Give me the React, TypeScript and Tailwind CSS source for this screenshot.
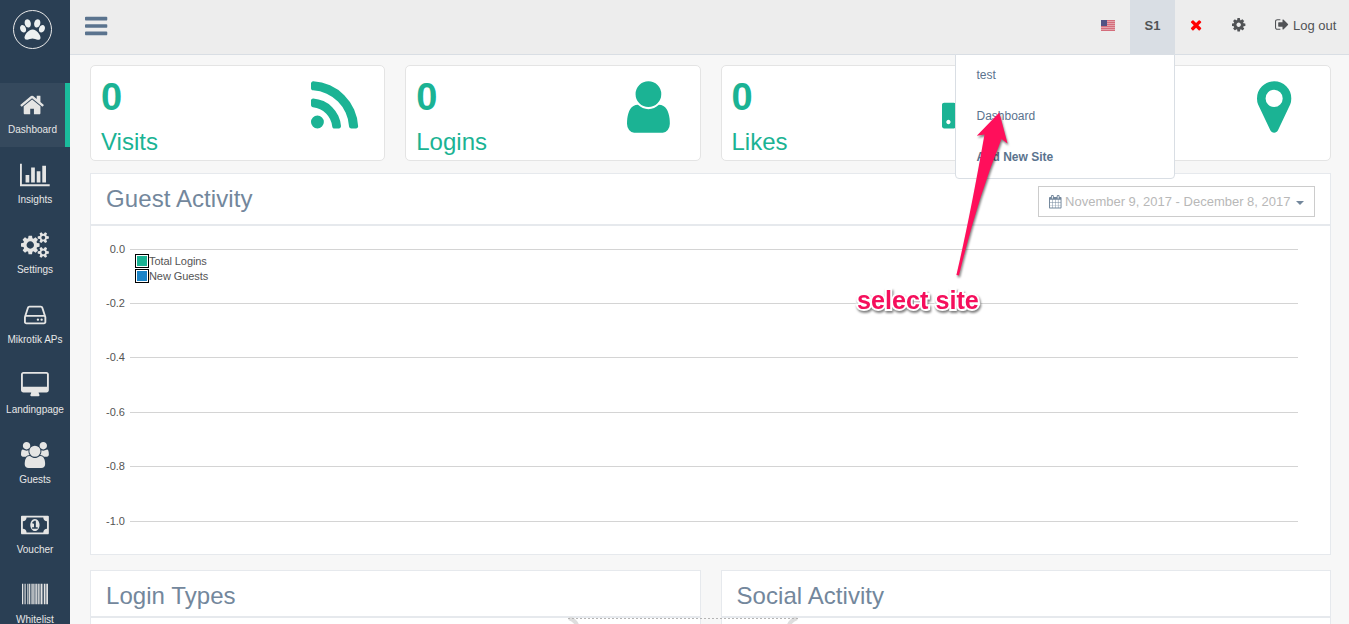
import React from "react";

const PATHS = {
  paw: "M780 508q0 60-19 113.5t-63 92.5-105 39q-76 0-138-57.5t-92-135.5-30-151q0-60 19-113.5t63-92.5 105-39q77 0 138.5 57.5t91.5 135 30 151.5zM439 921q0 80-42 139t-119 59q-76 0-141.5-55.5t-100.5-133.5-35-152q0-80 42-139.5t119-59.5q76 0 141.5 55.5t100.5 134 35 152.5zM896 894q118 0 255 97.5t229 237 92 254.5q0 46-17 76.5t-48.5 45-64.5 20-76 5.5q-68 0-187.5-45t-182.5-45q-66 0-192.5 44.5t-200.5 44.5q-183 0-183-146 0-86 56-191.5t139.5-192.5 187.5-146 193-59zM1199 753q-61 0-105-39t-63-92.5-19-113.5q0-74 30-151.5t91.5-135 138.5-57.5q61 0 105 39t63 92.5 19 113.5q0 73-30 151t-92 135.5-138 57.5zM1630 579q77 0 119 59.5t42 139.5q0 74-35 152t-100.5 133.5-141.5 55.5q-77 0-119-59t-42-139q0-74 35-152.5t100.5-134 141.5-55.5z",
  home: "M1472 992v480q0 26-19 45t-45 19h-384v-384h-256v384h-384q-26 0-45-19t-19-45v-480q0-1 .5-3t.5-3l575-474 575 474q1 2 1 6zm223-69l-62 74q-8 9-21 11h-3q-13 0-21-7l-692-577-692 577q-12 8-24 7-13-2-21-11l-62-74q-8-10-7-23.5t11-21.5l719-599q32-26 76-26t76 26l244 204v-195q0-14 9-23t23-9h192q14 0 23 9t9 23v408l219 182q10 8 11 21.5t-7 23.5z",
  chart: "M640 896v512h-256v-512h256zm384-512v1024h-256v-1024h256zm1024 1152v128h-2048v-1536h128v1408h1920zm-640-896v768h-256v-768h256zm384-384v1152h-256v-1152h256z",
  cogs: "M832 896q0-106-75-181t-181-75-181 75-75 181 75 181 181 75 181-75 75-181zm768 512q0-52-38-90t-90-38-90 38-38 90q0 53 37.5 90.5t90.5 37.5 90.5-37.5 37.5-90.5zm0-1024q0-52-38-90t-90-38-90 38-38 90q0 53 37.5 90.5t90.5 37.5 90.5-37.5 37.5-90.5zm-384 421v185q0 10-7 19.5t-16 10.5l-155 24q-11 35-32 76 34 48 90 115 7 11 7 20 0 12-7 19-23 30-82.5 89.5t-78.5 59.5q-11 0-21-7l-115-90q-37 19-77 31-11 108-23 155-7 24-30 24h-186q-11 0-20-7.5t-10-17.5l-23-153q-34-10-75-31l-118 89q-7 7-20 7-11 0-21-8-144-133-144-160 0-9 7-19 10-14 41-53t47-61q-23-44-35-82l-152-24q-10-1-17-9.5t-7-19.5v-185q0-10 7-19.5t16-10.5l155-24q11-35 32-76-34-48-90-115-7-11-7-20 0-12 7-20 22-30 82-89t79-59q11 0 21 7l115 90q34-18 77-32 11-108 23-154 7-24 30-24h186q11 0 20 7.5t10 17.5l23 153q34 10 75 31l118-89q8-7 20-7 11 0 21 8 144 133 144 160 0 8-7 19-12 16-42 54t-45 60q23 48 34 82l152 23q10 2 17 10.5t7 19.5zm640 533v140q0 16-149 31-12 27-30 52 51 113 51 138 0 4-4 7-122 71-124 71-8 0-46-47t-52-68q-20 2-30 2t-30-2q-14 21-52 68t-46 47q-2 0-124-71-4-3-4-7 0-25 51-138-18-25-30-52-149-15-149-31v-140q0-16 149-31 13-29 30-52-51-113-51-138 0-4 4-7 4-2 35-20t59-34 30-16q8 0 46 46.5t52 67.5q20-2 30-2t30 2q51-71 92-112l6-2q4 0 124 70 4 3 4 7 0 25-51 138 17 23 30 52 149 15 149 31zm0-1024v140q0 16-149 31-12 27-30 52 51 113 51 138 0 4-4 7-122 71-124 71-8 0-46-47t-52-68q-20 2-30 2t-30-2q-14 21-52 68t-46 47q-2 0-124-71-4-3-4-7 0-25 51-138-18-25-30-52-149-15-149-31v-140q0-16 149-31 13-29 30-52-51-113-51-138 0-4 4-7 4-2 35-20t59-34 30-16q8 0 46 46.5t52 67.5q20-2 30-2t30 2q51-71 92-112l6-2q4 0 124 70 4 3 4 7 0 25-51 138 17 23 30 52 149 15 149 31z",
  hdd: "M1168 1216q0 33-23.5 56.5t-56.5 23.5-56.5-23.5-23.5-56.5 23.5-56.5 56.5-23.5 56.5 23.5 23.5 56.5zm256 0q0 33-23.5 56.5t-56.5 23.5-56.5-23.5-23.5-56.5 23.5-56.5 56.5-23.5 56.5 23.5 23.5 56.5zm112 160v-320q0-13-9.5-22.5t-22.5-9.5h-1216q-13 0-22.5 9.5t-9.5 22.5v320q0 13 9.5 22.5t22.5 9.5h1216q13 0 22.5-9.5t9.5-22.5zm-1230-480h1180l-157-482q-4-13-16-21.5t-26-8.5h-782q-14 0-26 8.5t-16 21.5zm1358 160v320q0 66-47 113t-113 47h-1216q-66 0-113-47t-47-113v-320q0-25 16-75l197-606q17-53 63-86t101-33h782q55 0 101 33t63 86l197 606q16 50 16 75z",
  desktop: "M1728 992v-832q0-13-9.5-22.5t-22.5-9.5h-1600q-13 0-22.5 9.5t-9.5 22.5v832q0 13 9.5 22.5t22.5 9.5h1600q13 0 22.5-9.5t9.5-22.5zm128-832v1088q0 66-47 113t-113 47h-544q0 37 16 77.5t32 71 16 43.5q0 26-19 45t-45 19h-512q-26 0-45-19t-19-45q0-14 16-44t32-70 16-78h-544q-66 0-113-47t-47-113v-1088q0-66 47-113t113-47h1600q66 0 113 47t47 113z",
  users: "M529 896q-162 5-265 128h-134q-82 0-138-40.5t-56-118.5q0-353 124-353 6 0 43.5 21t97.5 42.5 119 21.5q67 0 133-23-5 37-5 66 0 139 81 256zm1071 637q0 120-73 189.5t-194 69.5h-874q-121 0-194-69.5t-73-189.5q0-53 3.5-103.5t14-109 26.5-108.5 43-97.5 62-81 85.5-53.5 111.5-20q10 0 43 21.5t73 48 107 48 135 21.5 135-21.5 107-48 73-48 43-21.5q61 0 111.5 20t85.5 53.5 62 81 43 97.5 26.5 108.5 14 109 3.5 103.5zm-1024-1277q0 106-75 181t-181 75-181-75-75-181 75-181 181-75 181 75 75 181zm704 384q0 159-112.5 271.5t-271.5 112.5-271.5-112.5-112.5-271.5 112.5-271.5 271.5-112.5 271.5 112.5 112.5 271.5zm576 225q0 78-56 118.5t-138 40.5h-134q-103-123-265-128 81-117 81-256 0-29-5-66 66 23 133 23 59 0 119-21.5t97.5-42.5 43.5-21q124 0 124 353zm-128-609q0 106-75 181t-181 75-181-75-75-181 75-181 181-75 181 75 75 181z",
  money: "M768 1152h384v-96h-128v-448h-114l-148 137 77 80q42-37 55-57h2v288h-128v96zm512-256q0 70-21 142t-59.5 134-101.5 101-138 39-138-39-101.5-101-59.5-134-21-142 21-142 59.5-134 101.5-101 138-39 138 39 101.5 101 59.5 134 21 142zm512 256v-512q-106 0-181-75t-75-181h-1152q0 106-75 181t-181 75v512q106 0 181 75t75 181h1152q0-106 75-181t181-75zm128-832v1152q0 26-19 45t-45 19h-1792q-26 0-45-19t-19-45v-1152q0-26 19-45t45-19h1792q26 0 45 19t19 45z",
  barcode: "M0 128h80v1408h-80zM130 128h40v1408h-40zM215 128h45v1408h-45zM345 128h45v1408h-45zM455 128h90v1408h-90zM600 128h60v1408h-60zM690 128h50v1408h-50zM775 128h50v1408h-50zM860 128h80v1408h-80zM975 128h70v1408h-70zM1085 128h75v1408h-75zM1200 128h70v1408h-70zM1310 128h80v1408h-80zM1425 128h35v1408h-35zM1515 128h100v1408h-100zM1650 128h55v1408h-55zM1725 128h67v1408h-67z",
  bars: "M1664 1344v128q0 26-19 45t-45 19h-1408q-26 0-45-19t-19-45v-128q0-26 19-45t45-19h1408q26 0 45 19t19 45zm0-512v128q0 26-19 45t-45 19h-1408q-26 0-45-19t-19-45v-128q0-26 19-45t45-19h1408q26 0 45 19t19 45zm0-512v128q0 26-19 45t-45 19h-1408q-26 0-45-19t-19-45v-128q0-26 19-45t45-19h1408q26 0 45 19t19 45z",
  times: "M1490 1322q0 40-28 68l-136 136q-28 28-68 28t-68-28l-294-294-294 294q-28 28-68 28t-68-28l-136-136q-28-28-28-68t28-68l294-294-294-294q-28-28-28-68t28-68l136-136q28-28 68-28t68 28l294 294 294-294q28-28 68-28t68 28l136 136q28 28 28 68t-28 68l-294 294 294 294q28 28 28 68z",
  cog: "M1152 896q0-106-75-181t-181-75-181 75-75 181 75 181 181 75 181-75 75-181zm512-109v222q0 12-8 23t-20 13l-185 28q-19 54-39 91 35 50 107 138 10 12 10 25t-9 23q-27 37-99 108t-94 71q-12 0-26-9l-138-108q-44 23-91 38-16 136-29 186-7 28-36 28h-222q-14 0-24.5-8.5t-11.5-21.5l-28-184q-49-16-90-37l-141 107q-10 9-25 9-14 0-25-11-126-114-165-168-7-10-7-23 0-12 8-23 15-21 51-66.5t54-70.5q-27-50-41-99l-183-27q-13-2-21-12.5t-8-23.5v-222q0-12 8-23t19-13l186-28q14-46 39-92-40-57-107-138-10-12-10-24 0-10 9-23 26-36 98.5-107.5t94.5-71.5q13 0 26 10l138 107q44-23 91-38 16-136 29-186 7-28 36-28h222q14 0 24.5 8.5t11.5 21.5l28 184q49 16 90 37l142-107q9-9 24-9 13 0 25 10 129 119 165 170 7 8 7 22 0 12-8 23-15 21-51 66.5t-54 70.5q26 50 41 98l183 28q13 2 21 12.5t8 23.5z",
  signOut: "M704 1440q0 4 1 20t.5 26.5-3 23.5-10 19.5-20.5 6.5h-320q-119 0-203.5-84.5t-84.5-203.5v-704q0-119 84.5-203.5t203.5-84.5h320q13 0 22.5 9.5t9.5 22.5q0 4 1 20t.5 26.5-3 23.5-10 19.5-20.5 6.5h-320q-66 0-113 47t-47 113v704q0 66 47 113t113 47h312l11.5 1 11.5 3 8 5.5 7 9 2 13.5zm928-544q0 26-19 45l-544 544q-19 19-45 19t-45-19-19-45v-288h-448q-26 0-45-19t-19-45v-384q0-26 19-45t45-19h448v-288q0-26 19-45t45-19 45 19l544 544q19 19 19 45z",
  rss: "M576 1344q0 80-56 136t-136 56-136-56-56-136 56-136 136-56 136 56 56 136zm512 123q2 28-17 48-18 21-47 21h-135q-25 0-43-16.5t-20-41.5q-22-229-184.5-391.5t-391.5-184.5q-25-2-41.5-20t-16.5-43v-135q0-29 21-47 17-17 43-17h5q160 13 306 80.5t259 181.5q114 113 181.5 259t80.5 306zm512 2q2 27-18 47-18 20-46 20h-143q-26 0-44.5-17.5t-19.5-42.5q-12-215-101-408.5t-231.5-336-336-231.5-408.5-102q-25-1-42.5-19.5t-17.5-43.5v-143q0-28 20-46 18-18 44-18h3q262 13 501.5 120t425.5 294q187 186 294 425.5t120 501.5z",
  user: "M1536 1399q0 109-62.5 187t-150.5 78h-854q-88 0-150.5-78t-62.5-187q0-85 8.5-160.5t31.5-152 58.5-131 94-89 134.5-34.5q131 128 313 128t313-128q76 0 134.5 34.5t94 89 58.5 131 31.5 152 8.5 160.5zm-256-887q0 159-112.5 271.5t-271.5 112.5-271.5-112.5-112.5-271.5 112.5-271.5 271.5-112.5 271.5 112.5 112.5 271.5z",
  like: "M320 1344q0-26-19-45t-45-19q-27 0-45.5 19t-18.5 45q0 27 18.5 45.5t45.5 18.5q26 0 45-18.5t19-45.5zm160-512v640q0 26-19 45t-45 19h-288q-26 0-45-19t-19-45v-640q0-26 19-45t45-19h288q26 0 45 19t19 45zm1184 0q0 86-55 149 15 44 15 76 3 76-43 137 17 56 0 117-15 57-54 94 9 112-49 181-64 76-197 78h-129q-66 0-144-15.5t-121.5-29-120.5-39.5q-123-43-158-44-26-1-45-19.5t-19-44.5v-641q0-25 18-43.5t43-20.5q24-2 76-59t101-121q68-87 101-120 18-18 31-48t17.5-48.5 13.5-60.5q7-39 12.5-61t19.5-52 34-50q19-19 45-19 46 0 82.5 10.5t60 26 40 40.5 24 45 12 50 5 45 .5 39q0 38-9.5 76t-19 60-27.5 56q-3 6-10 18t-11 22-8 24h277q78 0 135 57t57 135z",
  marker: "M1152 640q0-106-75-181t-181-75-181 75-75 181 75 181 181 75 181-75 75-181zm256 0q0 109-33 179l-364 774q-16 33-47.5 52t-67.5 19-67.5-19-46.5-52l-365-774q-33-70-33-179 0-212 150-362t362-150 362 150 150 362z",
  calendar: "M192 1664h288v-288h-288v288zm352 0h320v-288h-320v288zm-352-352h288v-320h-288v320zm352 0h320v-320h-320v320zm-352-384h288v-288h-288v288zm736 736h320v-288h-320v288zm-384-736h320v-288h-320v288zm768 736h288v-288h-288v288zm-384-352h320v-320h-320v320zm-352-864v-288q0-13-9.5-22.5t-22.5-9.5h-64q-13 0-22.5 9.5t-9.5 22.5v288q0 13 9.5 22.5t22.5 9.5h64q13 0 22.5-9.5t9.5-22.5zm736 864h288v-320h-288v320zm-384-384h320v-288h-320v288zm384 0h288v-288h-288v288zm32-480v-288q0-13-9.5-22.5t-22.5-9.5h-64q-13 0-22.5 9.5t-9.5 22.5v288q0 13 9.5 22.5t22.5 9.5h64q13 0 22.5-9.5t9.5-22.5zm384-64v1280q0 52-38 90t-90 38h-1408q-52 0-90-38t-38-90v-1280q0-52 38-90t90-38h128v-96q0-66 47-113t113-47h64q66 0 113 47t47 113v96h384v-96q0-66 47-113t113-47h64q66 0 113 47t47 113v96h128q52 0 90 38t38 90z",
};

type IconName = keyof typeof PATHS;

// Glyphs share a 1792-unit em; x and w select the advance box of each one.
function Icon({ name, x = 0, w = 1792, className = "" }: { name: IconName; x?: number; w?: number; className?: string }) {
  return (
    <svg viewBox={`${x} 0 ${w} 1792`} fill="currentColor" className={`block w-auto shrink-0 overflow-visible ${className}`}>
      <path d={PATHS[name]} />
    </svg>
  );
}

const NAV: { label: string; icon: IconName; x?: number; w?: number }[] = [
  { label: "Dashboard", icon: "home", x: 64, w: 1664 },
  { label: "Insights", icon: "chart", w: 2048 },
  { label: "Settings", icon: "cogs", x: -64, w: 1920 },
  { label: "Mikrotik APs", icon: "hdd", x: 128, w: 1536 },
  { label: "Landingpage", icon: "desktop", x: -64, w: 1920 },
  { label: "Guests", icon: "users", x: -64, w: 1920 },
  { label: "Voucher", icon: "money", w: 1920 },
  { label: "Whitelist", icon: "barcode" },
];

function Sidebar() {
  return (
    <aside className="h-full w-[70px] shrink-0 overflow-hidden bg-[#2a3f54]">
      <div className="flex h-[83px] pt-[10px] pl-[13px]">
        <div className="flex size-[39px] items-center justify-center rounded-full border border-[#eaeaea] text-[#ecf0f1]">
          <Icon name="paw" className="h-[25px]" />
        </div>
      </div>
      <nav className="flex flex-col gap-[6px]">
        {NAV.map((n, i) => (
          <a
            key={n.label}
            className={`flex h-16 flex-col items-center pt-[9px] ${i === 0 ? "border-r-[5px] border-[#1abb9c] bg-[#35495d]" : ""}`}
          >
            <Icon name={n.icon} x={n.x} w={n.w} className="h-[26px] text-[#e5e5e4]" />
            <span className="mt-[5px] text-[10px] leading-[14px] whitespace-nowrap text-[#e7e7e7]">{n.label}</span>
          </a>
        ))}
      </nav>
    </aside>
  );
}

function Flag() {
  return (
    <svg viewBox="0 0 14 11" className="block h-[11px] w-[14px]">
      <rect width="14" height="11" fill="#e3a3ab" />
      <path d="M0 .5h14M0 2.5h14M0 4.5h14M0 6.5h14M0 8.5h14M0 10.5h14" stroke="#d0606f" strokeWidth=".8" />
      <rect width="6" height="6" fill="#515384" />
    </svg>
  );
}

function Header() {
  return (
    <header className="flex h-[55px] shrink-0 items-stretch justify-between border-b border-[#d9dee4] bg-[#ededed] text-[13px] text-[#515356]">
      <div className="pt-[13px] pl-[13px] text-[#5a738e]">
        <Icon name="bars" x={128} w={1536} className="ml-[2px] h-[26px] w-[23px]" />
      </div>
      <div className="flex h-[54px]">
        <div className="flex w-[44px] items-center justify-center pb-[3px]"><Flag /></div>
        <div className="relative flex w-[45px] items-center justify-center bg-[#d9dee4] pb-[3px] font-bold">
          S1
          <ul className="absolute top-[54px] right-0 z-10 h-[125px] w-[220px] rounded-b border border-[#d9dee4] bg-white text-[12px] font-normal text-[#5a738e]">
            <li className="-mt-px flex h-[41px] items-center pl-[20.5px]">test</li>
            <li className="flex h-[41px] items-center pl-[20.5px]">Dashboard</li>
            <li className="flex h-[41px] items-center pl-[20.5px] font-bold">Add New Site</li>
          </ul>
        </div>
        <div className="flex w-[42px] items-center justify-center pb-[5px] pl-px text-[#ff0000]"><Icon name="times" x={192} w={1408} className="h-[15.5px]" /></div>
        <div className="flex w-[43px] items-center justify-center pb-[5px]"><Icon name="cog" x={128} w={1536} className="h-[15.6px]" /></div>
        <div className="flex w-[89px] items-center gap-1 pb-[3px] pl-[15px] whitespace-nowrap">
          <Icon name="signOut" x={64} w={1664} className="mb-[2px] h-[15px]" />
          <span>Log out</span>
        </div>
      </div>
    </header>
  );
}

const STATS: { label: string; icon: IconName; x: number; w: number }[] = [
  { label: "Visits", icon: "rss", x: 192, w: 1408 },
  { label: "Logins", icon: "user", x: 256, w: 1280 },
  { label: "Likes", icon: "like", x: 64, w: 1664 },
  { label: "Places", icon: "marker", x: 384, w: 1024 },
];

function StatCard({ label, icon, x, w }: (typeof STATS)[number]) {
  return (
    <div className="flex h-[96px] rounded-[5px] border border-[#e4e4e4] bg-white text-[#1bb394]">
      <div className="w-[220px] shrink-0 pl-[10px]">
        <div className="mt-[9px] text-[38px] leading-[44px] font-bold">0</div>
        <div className="mt-[9px] text-2xl leading-[28px]">{label}</div>
      </div>
      <Icon name={icon} x={x} w={w} className="mt-[10.6px] ml-[0.4px] h-[60px]" />
    </div>
  );
}

const TICKS = ["0.0", "-0.2", "-0.4", "-0.6", "-0.8", "-1.0"];
const LEGEND = [
  { label: "Total Logins", swatch: "bg-[#1ab394]" },
  { label: "New Guests", swatch: "bg-[#1c84c6]" },
];

function GuestActivity() {
  return (
    <section className="mt-3 h-[382px] border border-[#e6e9ed] bg-white">
      <div className="flex h-[52px] justify-between border-b-2 border-[#e6e9ed] pr-[15px] pl-[15px]">
        <h2 className="pt-[11px] text-2xl leading-[28px] tracking-[0.09px] text-[#73879c]">Guest Activity</h2>
        <div className="mt-3 flex h-[31px] w-[277px] items-center border border-[#ccc] pl-[10px] text-[#73879c]">
          <Icon name="calendar" x={64} w={1664} className="mt-px h-[13.5px]" />
          <span className="ml-[3.5px] text-[13px] whitespace-nowrap text-[#b8b8b8]">November 9, 2017 - December 8, 2017</span>
          <i className="mt-[2px] ml-[5px] border-x-4 border-t-4 border-x-transparent border-t-[#73879c]" />
        </div>
      </div>
      <div className="relative flex flex-col gap-[42.45px] pt-[17px] pr-8 pl-[14px]">
        {TICKS.map((t) => (
          <div key={t} className="flex h-3 items-center text-[11px] leading-3 text-[#545454]">
            <span className="w-[20px] pb-[0.9px] text-right">{t}</span>
            <span className="ml-[5px] h-px flex-1 bg-[#d4d4d4]" />
          </div>
        ))}
        <div className="absolute top-[28px] left-[44px] flex flex-col gap-px">
          {LEGEND.map((l) => (
            <div key={l.label} className="flex h-[14px] items-center text-[11px] tracking-[-0.08px] text-[#545454]">
              <span className="size-[14px] border border-black bg-white p-px">
                <span className={`block size-full ${l.swatch}`} />
              </span>
              {l.label}
            </div>
          ))}
        </div>
      </div>
    </section>
  );
}

function Panel({ title }: { title: string }) {
  return (
    <section className="h-[200px] border border-[#e6e9ed] bg-white">
      <h2 className="h-[47px] border-b-2 border-[#e6e9ed] pt-[11px] pl-[15px] text-2xl leading-[28px] tracking-[0.06px] text-[#73879c]">{title}</h2>
    </section>
  );
}

function Annotation() {
  return (
    <>
      <svg className="pointer-events-none absolute top-[100px] left-[940px] z-20 h-[190px] w-[80px] overflow-visible drop-shadow-[1px_2px_1px_rgba(0,0,0,0.5)]" viewBox="940 100 80 190">
        <path d="M999.3 112.5L1007.5 143.5L1001.5 139Q977 200 959 275.5L956.4 275Q970 217 984.5 134.5L976.8 135.7Z" fill="#ff0f5b" />
      </svg>
      <div className="absolute top-[286px] left-[857px] z-20 text-[25.2px] leading-[28px] font-bold whitespace-nowrap text-[#f50f5c] [-webkit-text-stroke:4px_white] [paint-order:stroke_fill] drop-shadow-[1px_2px_1px_rgba(0,0,0,0.5)]">
        select site
      </div>
    </>
  );
}

export default function App() {
  return (
    <div className="relative flex h-[624px] w-[1349px] overflow-hidden bg-[#f7f7f7] font-['Liberation_Sans',Arial,sans-serif]">
      <Sidebar />
      <div className="flex min-w-0 flex-1 flex-col">
        <Header />
        <main className="pt-[10px] pr-[18px] pl-5">
          <div className="grid grid-cols-4 gap-5">
            {STATS.map((s) => <StatCard key={s.label} {...s} />)}
          </div>
          <GuestActivity />
          <div className="mt-[15px] grid grid-cols-2 gap-5">
            <Panel title="Login Types" />
            <Panel title="Social Activity" />
          </div>
        </main>
      </div>
      <svg className="absolute top-[617px] left-[566px] z-10 h-[7px] w-[234px]" viewBox="0 0 234 7">
        <path d="M3 1q6 2 8 7M231 1q-6 2-8 7" fill="none" stroke="#dedede" strokeWidth="4" />
        <path d="M2 1.5h230" stroke="#b5b5b5" strokeDasharray="2 2" />
      </svg>
      <Annotation />
    </div>
  );
}
